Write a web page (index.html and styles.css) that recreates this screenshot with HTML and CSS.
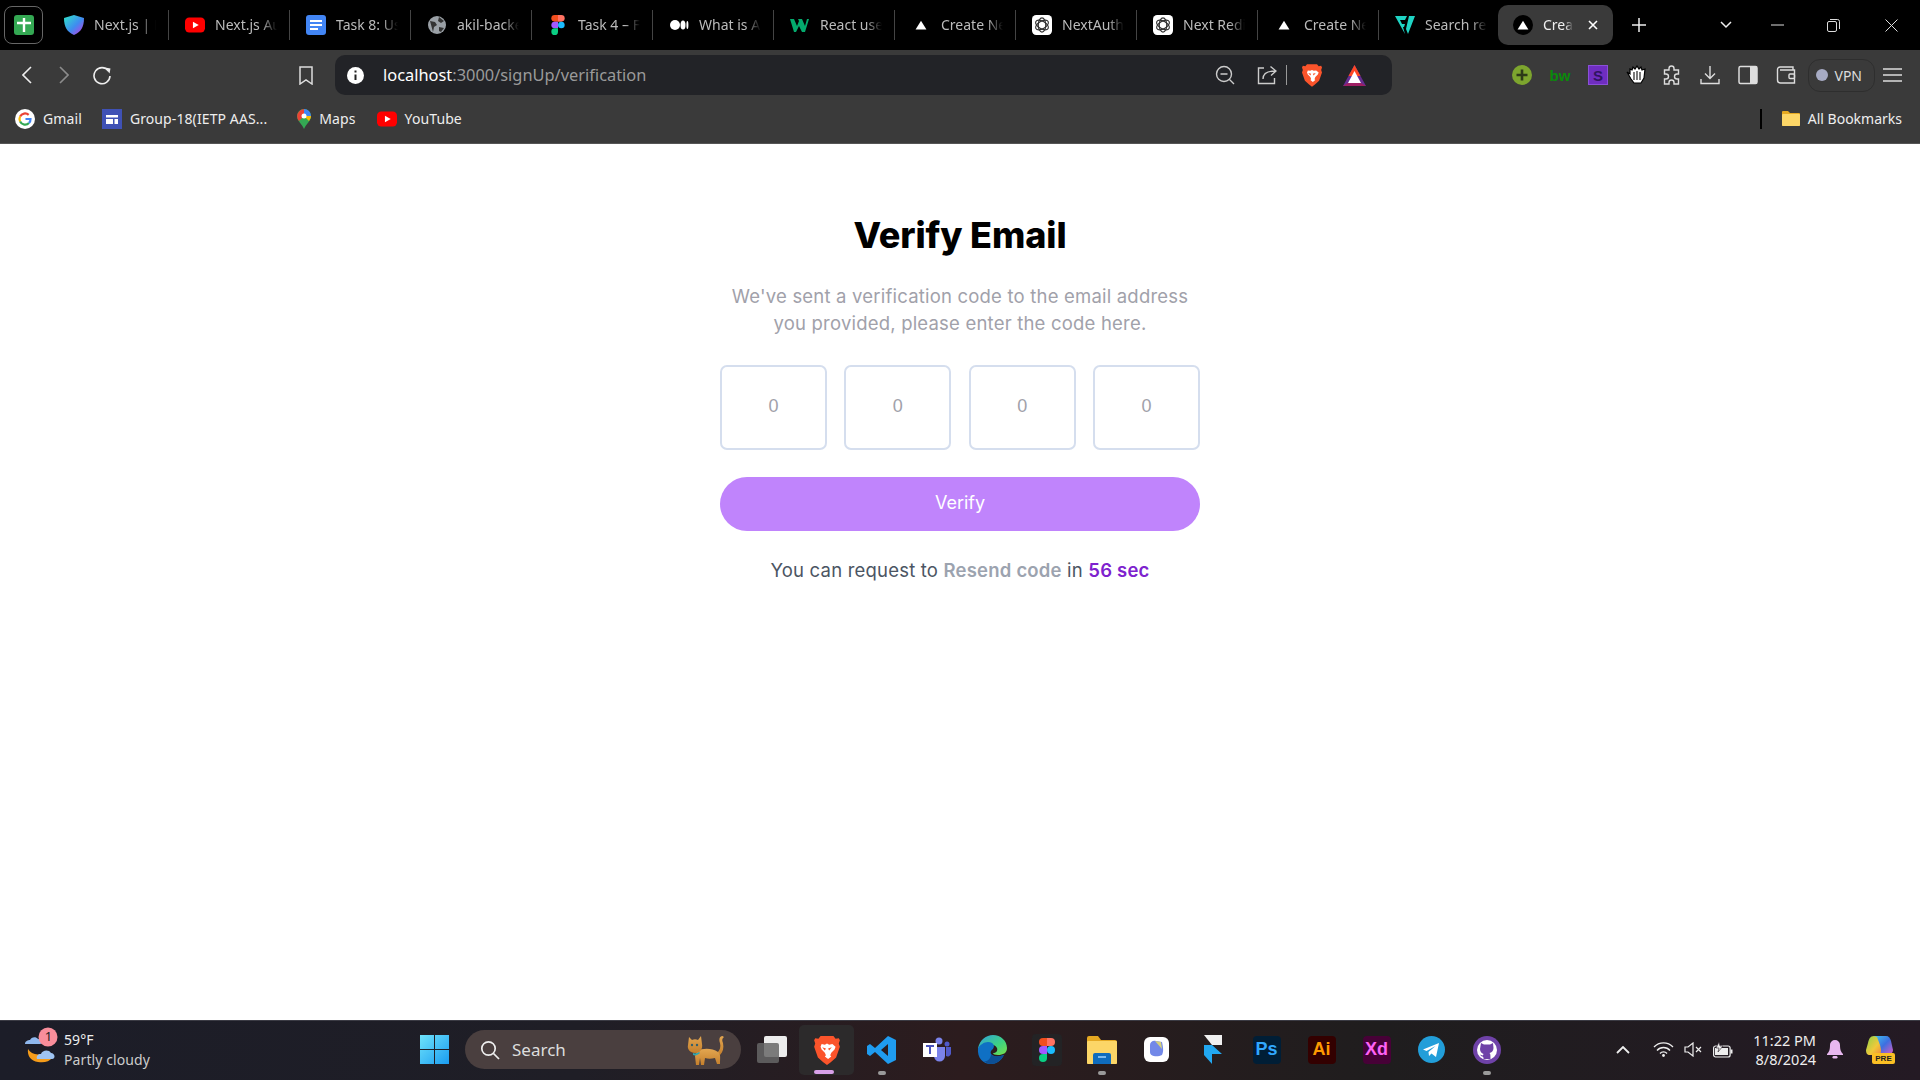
FILE: index.html
```html
<!DOCTYPE html>
<html>
	<head>
		<meta charset="utf-8">
		<title>Verify Email</title>
		<link rel="stylesheet" href="styles.css">
	</head>
	<body>
		<svg class="defs" width="0" height="0">
			<symbol id="vercel" viewBox="0 0 24 24"><circle cx="12" cy="12" r="12" fill="#000"/><path d="M12 7l6.500 10.500h-13z" fill="#fff"/></symbol>
			<symbol id="openai" viewBox="0 0 24 24"><rect width="24" height="24" rx="5" fill="#fff"/><g fill="none" stroke="#333" stroke-width="1.4"><ellipse cx="12" cy="12" rx="4.5" ry="8.5"/><ellipse cx="12" cy="12" rx="4.5" ry="8.5" transform="rotate(60 12 12)"/><ellipse cx="12" cy="12" rx="4.5" ry="8.5" transform="rotate(120 12 12)"/></g></symbol>
			<symbol id="yt" viewBox="0 0 24 24"><rect y="3" width="24" height="18" rx="5" fill="#f00"/><path d="M9.5 8l7 4-7 4z" fill="#fff"/></symbol>
			<symbol id="figma" viewBox="0 0 24 36"><path d="M12 0H6a6 6 0 000 12h6z" fill="#f24e1e"/><path d="M12 0h6a6 6 0 010 12h-6z" fill="#ff7262"/><path d="M12 12H6a6 6 0 000 12h6z" fill="#a259ff"/><circle cx="18" cy="18" r="6" fill="#1abcfe"/><path d="M6 24h6v6a6 6 0 11-6-6z" fill="#0acf83"/></symbol>
			<symbol id="brave" viewBox="0 0 24 28"><path d="M6 1h12l2 2.500 3-.5 1 2-1 3 1 3-3.500 10-5 4.500L12 28l-3.500-2.500-5-4.500L0 11l1-3-1-3 1-2 3 .5z" fill="#fb542b"/><path d="M7 8.500l3 .5 2-1 2 1 3-.5 3 2.500-1 2.500-3 3-1 2.500 1 1-3 2.500-3-2.500 1-1-1-2.500-3-3-1-2.500z" fill="#fff"/><path d="M7.500 11.500l3.500 1-1 2zM16.500 11.500l-3.500 1 1 2z" fill="#fb542b"/></symbol>
		</svg>

		<div class="tabstrip">
			<div class="appbtn">
				<svg width="20" height="20" viewBox="0 0 20 20"><rect width="20" height="20" rx="3" fill="#34a853"/><path d="M10 3v14M3 8h14" stroke="#fff" stroke-width="2.4"/></svg>
			</div>
			<div class="tab">
				<svg class="tabicon" viewBox="0 0 20 20"><defs><linearGradient id="sh" x1="0" y1="0" x2="1" y2="1"><stop offset="0" stop-color="#2ee6c8"/><stop offset=".55" stop-color="#3f8cf0"/><stop offset="1" stop-color="#d032e0"/></linearGradient></defs><path d="M10 0l10 3c0 9-3 14-10 17C3 17 0 12 0 3z" fill="url(#sh)"/></svg>
				<span class="tabtext">Next.js | Next</span>
			</div>
			<div class="tab"><svg class="tabicon"><use href="#yt"/></svg><span class="tabtext">Next.js Auth</span></div>
			<div class="tab">
				<svg class="tabicon" viewBox="0 0 20 20"><rect width="20" height="20" rx="3" fill="#4285f4"/><path d="M4 6h12M4 10h12M4 14h8" stroke="#fff" stroke-width="1.8"/></svg>
				<span class="tabtext">Task 8: User</span>
			</div>
			<div class="tab">
				<svg class="tabicon" viewBox="0 0 20 20"><circle cx="10" cy="10" r="9" fill="#9aa0a6"/><path d="M3 6l5 1 2 3-3 2-1 5zM12 2l5 4-3 2-3-2zM12 12l5 1-3 4-2-1z" fill="#333"/></svg>
				<span class="tabtext">akil-backend</span>
			</div>
			<div class="tab"><svg class="tabicon"><use href="#figma"/></svg><span class="tabtext">Task 4 – Fig</span></div>
			<div class="tab">
				<svg class="tabicon" viewBox="0 0 20 20"><circle cx="6" cy="10" r="5" fill="#fff"/><ellipse cx="14" cy="10" rx="2.500" ry="4.600" fill="#fff"/><ellipse cx="18.400" cy="10" rx="1" ry="4" fill="#fff"/></svg>
				<span class="tabtext">What is App</span>
			</div>
			<div class="tab">
				<svg class="tabicon" viewBox="0 0 20 20"><path d="M0 4h4l3 7 2-5-1-2h4l3 7 2-7h2l-4 13h-3l-3-6-3 6H4z" fill="#04aa6d"/></svg>
				<span class="tabtext">React useEff</span>
			</div>
			<div class="tab"><svg class="tabicon"><use href="#vercel"/></svg><span class="tabtext">Create Next</span></div>
			<div class="tab"><svg class="tabicon"><use href="#openai"/></svg><span class="tabtext">NextAuth.js</span></div>
			<div class="tab"><svg class="tabicon"><use href="#openai"/></svg><span class="tabtext">Next Redire</span></div>
			<div class="tab"><svg class="tabicon"><use href="#vercel"/></svg><span class="tabtext">Create Next</span></div>
			<div class="tab lasttab">
				<svg class="tabicon" viewBox="0 0 20 20"><path d="M0 1h12l-2 4H5l2 4h3l-1 3-1 0 2 7zM14 1h6l-7 18-2-5z" fill="#1fd4c4"/></svg>
				<span class="tabtext">Search resu</span>
			</div>
			<div class="tab activetab">
				<svg class="tabicon"><use href="#vercel"/></svg>
				<span class="tabtext">Create</span>
				<svg class="tabclose" width="10" height="10" viewBox="0 0 10 10"><path d="M1 1l8 8M9 1l-8 8" stroke="#fff" stroke-width="1.6"/></svg>
			</div>
			<svg class="newtab" width="14" height="14" viewBox="0 0 14 14"><path d="M7 0v14M0 7h14" stroke="#eee" stroke-width="1.5"/></svg>
			<div class="winbtns">
				<svg width="12" height="8" viewBox="0 0 12 8"><path d="M1 1l5 5 5-5" fill="none" stroke="#eee" stroke-width="1.5"/></svg>
				<svg class="winmin" width="13" height="2" viewBox="0 0 13 2"><path d="M0 1h13" stroke="#ddd"/></svg>
				<svg width="13" height="13" viewBox="0 0 13 13"><rect x=".5" y="2.500" width="9" height="10" rx="1.500" fill="none" stroke="#ddd"/><path d="M3 .5h7.500a2 2 0 012 2V10" fill="none" stroke="#ddd"/></svg>
				<svg class="winclose" width="13" height="13" viewBox="0 0 13 13"><path d="M.5.5l12 12M12.500.5l-12 12" stroke="#ddd"/></svg>
			</div>
		</div>

		<div class="toolbar">
			<div class="navbtns">
				<svg width="10" height="18" viewBox="0 0 10 18"><path d="M9 1L1 9l8 8" fill="none" stroke="#eee" stroke-width="1.6"/></svg>
				<svg width="10" height="18" viewBox="0 0 10 18"><path d="M1 1l8 8-8 8" fill="none" stroke="#8c8c8c" stroke-width="1.6"/></svg>
				<svg class="reload" width="20" height="20" viewBox="0 0 20 20"><path d="M16.500 6A8 8 0 1018 11" fill="none" stroke="#eee" stroke-width="1.6"/><path d="M13 2.500l5.500 1-1 5z" fill="#eee"/></svg>
			</div>
			<svg class="bookmark" width="14" height="19" viewBox="0 0 14 19"><path d="M1 1h12v17l-6-4-6 4z" fill="none" stroke="#ddd" stroke-width="1.500"/></svg>
			<div class="addressbar">
				<svg width="17" height="17" viewBox="0 0 17 17"><circle cx="8.500" cy="8.500" r="8.500" fill="#fff"/><path d="M8.500 7.500v5.500M8.500 3.500v2" stroke="#222" stroke-width="2"/></svg>
				<div class="url">localhost<span class="urlrest">:3000/signUp/verification</span></div>
				<svg class="addricon" width="20" height="20" viewBox="0 0 20 20"><circle cx="9" cy="9" r="7.500" fill="none" stroke="#ccc" stroke-width="1.400"/><path d="M5.500 9h7M14.500 14.500l4.500 4.500" stroke="#ccc" stroke-width="1.400"/></svg>
				<svg class="shareicon" width="20" height="20" viewBox="0 0 20 20"><path d="M7 3H1.500v15.500h16V13" fill="none" stroke="#ccc" stroke-width="1.400"/><path d="M6 14c0-6 4-8 12-8M13.500 1.500L19 6l-5 4.500" fill="none" stroke="#ccc" stroke-width="1.400"/></svg>
				<div class="addrsep"></div>
				<svg width="20" height="24"><use href="#brave"/></svg>
				<svg class="baticon" width="23" height="21" viewBox="0 0 23 21"><path d="M11.500 0L23 21H0z" fill="#662d91"/><path d="M11.500 0l6 11H5.500z" fill="#ff4724"/><path d="M11.500 6l6.500 12H5z" fill="#fff"/><path d="M0 21l5-3h13l5 3z" fill="#9e1f63"/></svg>
			</div>
			<div class="extensions">
				<svg class="exticon" width="20" height="20" viewBox="0 0 20 20"><circle cx="10" cy="10" r="10" fill="#7da52e"/><path d="M10 4.500v11M4.500 10h11" stroke="#2d3a18" stroke-width="2.600"/></svg>
				<span class="exticon bw">bw</span>
				<span class="exticon skicon">S</span>
				<svg class="exticon handicon" width="20" height="20" viewBox="0 0 20 20"><path d="M1 7l3 2V4l2 1 1-3 2 2 2-3 2 3 2-2 1 3 3-1-1 9-3 5H8l-3-4z" fill="#fff" stroke="#000" stroke-width="1.200"/><path d="M8 7v8M11 6v9M14 7v8" stroke="#222" stroke-width="1.200"/></svg>
				<svg class="exticon" width="20" height="20" viewBox="0 0 20 20"><path d="M7 3.500a2.500 2.500 0 015 0V5h4.500v4H15a2.500 2.500 0 000 5h1.500v5H12v-1.500a2.500 2.500 0 00-5 0V19H2.500v-5H4a2.500 2.500 0 000-5H2.500V5H7z" fill="none" stroke="#ddd" stroke-width="1.400"/></svg>
				<svg class="exticon" width="20" height="20" viewBox="0 0 20 20"><path d="M10 1v12M5 8.500l5 5 5-5M1 14v4.500h18V14" fill="none" stroke="#ddd" stroke-width="1.400"/></svg>
				<svg class="exticon" width="20" height="20" viewBox="0 0 20 20"><rect x="1" y="1.500" width="18" height="17" rx="1.500" fill="none" stroke="#ddd" stroke-width="1.500"/><rect x="12" y="1.500" width="7" height="17" fill="#ddd"/></svg>
				<svg class="exticon" width="20" height="20" viewBox="0 0 20 20"><path d="M17 5V2H4a2.500 2.500 0 00-2.500 2.500V15A3 3 0 004.500 18h14V5H4" fill="none" stroke="#ddd" stroke-width="1.400"/><rect x="13" y="9" width="5.500" height="4.500" rx="1" fill="none" stroke="#ddd" stroke-width="1.400"/></svg>
				<div class="vpn"><span class="vpndot"></span>VPN</div>
				<svg class="menuicon" width="19" height="14" viewBox="0 0 19 14"><path d="M0 1h19M0 7h19M0 13h19" stroke="#ddd" stroke-width="1.400"/></svg>
			</div>
		</div>

		<div class="bookmarks">
			<div class="bm">
				<svg width="20" height="20" viewBox="0 0 20 20"><circle cx="10" cy="10" r="10" fill="#fff"/><path d="M5.100 7.500A5.500 5.500 0 0113.700 5.900" fill="none" stroke="#ea4335" stroke-width="2.200"/><path d="M5.100 12.500a5.500 5.500 0 010-5" fill="none" stroke="#fbbc05" stroke-width="2.200"/><path d="M14 14a5.500 5.500 0 01-8.900-1.500" fill="none" stroke="#34a853" stroke-width="2.200"/><path d="M10.500 10h5a5.500 5.500 0 01-1.500 4" fill="none" stroke="#4285f4" stroke-width="2.200"/></svg>
				Gmail
			</div>
			<div class="bm bm-group">
				<svg width="20" height="20" viewBox="0 0 20 20"><rect width="20" height="20" fill="#3f51b5"/><path d="M4 6h12v2.500H4zM4 10h7v5H4zM12.500 10H16v5h-3.500z" fill="#fff"/></svg>
				Group-18(IETP AAS...
			</div>
			<div class="bm bm-maps">
				<svg width="14" height="20" viewBox="0 0 14 20"><path d="M7 0a7 7 0 017 7c0 5-5 8-7 13-2-5-7-8-7-13a7 7 0 017-7z" fill="#34a853"/><path d="M2 2.500A7 7 0 017 0l0 7-5 5a7 7 0 010-9.500z" fill="#ea4335"/><path d="M7 0a7 7 0 017 7H7z" fill="#4285f4"/><path d="M14 7c0 2-1 3.500-2 5L7 7z" fill="#fbbc05"/><circle cx="7" cy="7" r="2.500" fill="#fff"/></svg>
				Maps
			</div>
			<div class="bm bm-yt"><svg width="20" height="20"><use href="#yt"/></svg>YouTube</div>
			<div class="bmdivider"></div>
			<div class="bm bm-all">
				<svg width="20" height="17" viewBox="0 0 20 17"><path d="M1 2a1 1 0 011-1h5l2 2h9a1 1 0 011 1v11a1 1 0 01-1 1H2a1 1 0 01-1-1z" fill="#e5a922"/><rect x="1" y="4" width="18" height="12" rx="1" fill="#fcd667"/></svg>
				All Bookmarks
			</div>
		</div>

		<div class="page">
			<div class="card">
				<h1>Verify Email</h1>
				<p class="lead">We've sent a verification code to the email address you provided, please enter the code here.</p>
				<div class="codes">
					<div class="codebox">0</div>
					<div class="codebox">0</div>
					<div class="codebox">0</div>
					<div class="codebox">0</div>
				</div>
				<button class="verify">Verify</button>
				<p class="resend">You can request to <b class="resendlink">Resend code</b> in <b class="timer">56 sec</b></p>
			</div>
		</div>

		<div class="taskbar">
			<div class="weather">
				<svg class="weathericon" width="36" height="44" viewBox="0 0 36 44"><path d="M4 21c3 5 9 7 17 4l8 4c-4 5-9 6-15 5-7-1-11-6-10-13z" fill="#f59c1a"/><path d="M1 16c0-3 3-4 5-4 1-3 6-4 8-1 4 0 5 5 2 5z" fill="#8fb8ee"/><path d="M13 31c-1-3 1-5 4-5 1-4 8-5 10-1 4 0 5 6 1 6z" fill="#9fc4f2"/><circle cx="24" cy="9" r="9.500" fill="#f98e9b"/></svg>
				<span class="badge1">1</span>
				<div class="weathertext"><span>59°F</span><span class="dim">Partly cloudy</span></div>
			</div>
			<div class="startbtn">
				<svg width="29" height="29" viewBox="0 0 29 29"><defs><linearGradient id="win" x1="0" y1="0" x2="1" y2="1"><stop offset="0" stop-color="#6fe3fb"/><stop offset="1" stop-color="#1a9cf0"/></linearGradient></defs><path d="M0 0h14v14H0zM15 0h14v14H15zM0 15h14v14H0zM15 15h14v14H15z" fill="url(#win)"/></svg>
			</div>
			<div class="searchbox">
				<svg width="20" height="20" viewBox="0 0 20 20"><circle cx="8.500" cy="8.500" r="6.700" fill="none" stroke="#eee" stroke-width="1.700"/><path d="M13.500 13.500l5.500 5.500" stroke="#eee" stroke-width="1.700"/></svg>
				<span class="searchtext">Search</span>
				<svg class="cat" width="38" height="32" viewBox="0 0 38 32"><defs><linearGradient id="catfur" x1="0" y1="0" x2="0" y2="1"><stop offset="0" stop-color="#e3a650"/><stop offset="1" stop-color="#c47f2c"/></linearGradient></defs><path d="M31 19c3-3 4-6 3-10-1-3-1-6 2-7 2 0 2 2 1 2-1 1-1 3 0 5 1 5 0 9-3 12z" fill="url(#catfur)"/><path d="M11 17c6-3 15-3 21 1 3 2 2 6 2 12h-3l-2-6c-4 1-7 1-10 0l-1 7h-3l-1-7-1 7h-3l-1-9z" fill="url(#catfur)"/><path d="M3 3l3 3c2-1 4-1 6 0l3-4 1 8c1 5-2 9-7 9-5 0-8-4-7-8z" fill="url(#catfur)"/><path d="M7 19c2 1 5 0 6-1l1 1c-2 2-5 3-7 2z" fill="#2fa8b0"/><circle cx="6" cy="11" r="1.200" fill="#35606b"/><circle cx="11" cy="11" r="1.200" fill="#35606b"/></svg>
			</div>
			<div class="tbapps">
				<div class="tbapp">
					<svg width="30" height="27" viewBox="0 0 30 27"><rect x="7" y="0" width="23" height="21" rx="2" fill="#ededed"/><rect x="0" y="7" width="22" height="20" rx="2" fill="#666" opacity=".85"/></svg>
				</div>
				<div class="tbapp tbbrave"><svg width="26" height="30"><use href="#brave"/></svg><i class="activebar"></i></div>
				<div class="tbapp">
					<svg width="30" height="30" viewBox="0 0 30 30"><path d="M21 1l8 4v20l-8 4L8 17l-5 4-3-2v-8l3-2 5 4zM21 9l-7 6 7 6z" fill="#1f9cf0"/></svg><i class="rundot"></i>
				</div>
				<div class="tbapp">
					<svg width="28" height="26" viewBox="0 0 28 26"><circle cx="16" cy="4" r="3.500" fill="#7b83eb"/><circle cx="24" cy="7" r="2.500" fill="#5059c9"/><path d="M11 10h11v9a5.500 5.500 0 01-11 0z" fill="#7b83eb"/><path d="M23 10h5v7a3.500 3.500 0 01-5 2z" fill="#5059c9"/><rect y="6" width="14" height="14" fill="#fff"/><path d="M3 9h8M7 9v8" stroke="#4b53bc" stroke-width="2"/></svg>
				</div>
				<div class="tbapp">
					<svg width="30" height="30" viewBox="0 0 30 30"><defs><linearGradient id="edge" x1="0" y1="0" x2="1" y2="1"><stop offset="0" stop-color="#2f9fe0"/><stop offset=".6" stop-color="#3fd47f"/><stop offset="1" stop-color="#7be04a"/></linearGradient></defs><path d="M1 13C3 5 9 0 16 0c8 0 14 6 14 13 0 5-4 7-9 7-3 0-5-1-5-2 3 0 5-2 4-5-2-4-8-4-12-1-3 2-6 4-7 1z" fill="url(#edge)"/><path d="M1 13c2-3 6-6 10-6 6 0 7 4 5 7-2 1-3 3-2 5 2 3 8 3 13 1-3 6-8 9-13 9C6 29 0 23 1 13z" fill="#0f70c4"/><path d="M14 19c2 3 8 3 13 1-3 6-8 9-13 9-3 0-5-1-7-3 4 1 7-3 7-7z" fill="#0c4f95"/></svg>
				</div>
				<div class="tbapp"><div class="figmatile"><svg width="16" height="24"><use href="#figma"/></svg></div></div>
				<div class="tbapp">
					<svg width="30" height="28" viewBox="0 0 30 28"><path d="M0 2a2 2 0 012-2h9l3 4h14a2 2 0 012 2v20a2 2 0 01-2 2H2a2 2 0 01-2-2z" fill="#e5a922"/><rect y="5" width="30" height="23" rx="1" fill="#fcd667"/><path d="M6 19a2 2 0 012-2h14a2 2 0 012 2v9H6z" fill="#0f6cbd"/><path d="M11 21h8" stroke="#9fd3ff" stroke-width="1.500"/></svg><i class="rundot"></i>
				</div>
				<div class="tbapp">
					<svg width="25" height="25" viewBox="0 0 25 25"><rect width="25" height="25" rx="6" fill="#fff"/><path d="M6 8c0-3 3-5 6-4l6 1c1 5 2 9 0 13-4 2-12 2-12-3z" fill="#7288e8"/><path d="M11 4l6 1 1 7z" fill="#d6d27a"/></svg>
				</div>
				<div class="tbapp">
					<svg width="20" height="29" viewBox="0 0 20 29"><path d="M2 0h18v10H10z" fill="#f0f0f0"/><path d="M2 10h8l10 9H10v10l-8-9z" fill="#22a7f0"/></svg>
				</div>
				<div class="tbapp"><span class="adobe ps">Ps</span></div>
				<div class="tbapp"><span class="adobe ai">Ai</span></div>
				<div class="tbapp"><span class="adobe xd">Xd</span></div>
				<div class="tbapp">
					<svg width="27" height="27" viewBox="0 0 27 27"><circle cx="13.500" cy="13.500" r="13.500" fill="#229ed9"/><path d="M5 13.500l16-6.500-3 14-4.500-3.500-2.500 2.500-.5-4 7-6-9 5z" fill="#fff"/></svg>
				</div>
				<div class="tbapp">
					<svg width="28" height="28" viewBox="0 0 28 28"><circle cx="14" cy="14" r="14" fill="#6f42a8"/><circle cx="14" cy="14" r="10" fill="#fff"/><path d="M8 7l3 1.500h6L20 7l.5 5c0 3-2 4.500-4 5 1 1 1 2 1 6h-7c0-1.500 0-2-1-2.500-1.500 0-2-1.500-2.500-2 1 0 1.500 1 2.500 1 .5 0 .7-1 1-1.500-2-.5-3.500-2.500-3.500-5z" fill="#6f42a8"/></svg><i class="rundot"></i>
				</div>
			</div>
			<div class="tray">
				<svg class="trayicon chevup" width="14" height="8" viewBox="0 0 14 8"><path d="M1 7l6-6 6 6" fill="none" stroke="#eee" stroke-width="1.800"/></svg>
				<svg class="trayicon" width="21" height="15" viewBox="0 0 21 15"><path d="M1 5a13 13 0 0119 0M4 8.500a8.500 8.500 0 0113 0M7 11.500a4.500 4.500 0 017 0" fill="none" stroke="#eee" stroke-width="1.300"/><circle cx="10.500" cy="13.500" r="1.400" fill="#eee"/></svg>
				<svg class="trayicon" width="19" height="15" viewBox="0 0 19 15"><path d="M1 5h3l5-4v13l-5-4H1z" fill="none" stroke="#eee" stroke-width="1.200"/><path d="M12 5l5 5M17 5l-5 5" stroke="#eee" stroke-width="1.200"/></svg>
				<svg class="trayicon" width="20" height="16" viewBox="0 0 20 16"><rect x=".6" y="4" width="16.500" height="11" rx="2" fill="none" stroke="#eee" stroke-width="1.200"/><rect x="2" y="6" width="13" height="7" fill="#eee"/><rect x="17.500" y="7.500" width="2" height="4" fill="#eee"/><path d="M6 0L3 6h3l-1 4 5-6H7z" fill="#eee" stroke="#231a22" stroke-width=".6"/></svg>
				<div class="clock"><span>11:22 PM</span><span>8/8/2024</span></div>
				<svg class="bell" width="16" height="19" viewBox="0 0 16 19"><path d="M8 0a5 5 0 015 5c0 5 1 7 3 9v1H0v-1c2-2 3-4 3-9a5 5 0 015-5z" fill="#e8b7ef"/><rect x="5.500" y="16" width="5" height="2.500" rx="1.200" fill="#e8b7ef"/></svg>
				<div class="copilot">
					<svg width="29" height="24" viewBox="0 0 29 24"><defs><linearGradient id="cp" x1="0" y1="0" x2="1" y2="1"><stop offset="0" stop-color="#3fc2f0"/><stop offset=".5" stop-color="#3d6fe0"/><stop offset="1" stop-color="#e35bc0"/></linearGradient><linearGradient id="cp2" x1="0" y1="0" x2="1" y2="1"><stop offset="0" stop-color="#8bd24a"/><stop offset=".6" stop-color="#f0c93a"/><stop offset="1" stop-color="#f08a3a"/></linearGradient></defs><path d="M9 2h12c3 0 4 2 5 5l2 9c0 3-3 5-6 5H12z" fill="url(#cp)"/><path d="M9 2C5 2 4 5 3 9l-2 7c0 3 1 5 4 5h9c3-2 2-6 1-10L12 3z" fill="url(#cp2)"/></svg>
					<span class="pre">PRE</span>
				</div>
			</div>
		</div>
	</body>
</html>
```

FILE: styles.css
```css
html, body {
	margin: 0;
	padding: 0;
	height: 100%;
	}

body {
	display: flex;
	flex-direction: column;
	height: 1080px;
	overflow: hidden;
	background: #fff;
	font: 14px "Noto Sans", "Open Sans", sans-serif;
	}

.defs {
	position: absolute;
	}

/* tab strip */
.tabstrip {
	display: flex;
	align-items: center;
	height: 50px;
	flex: none;
	background: #000;
	color: #bbb;
	}

.appbtn {
	display: flex;
	align-items: center;
	justify-content: center;
	flex: none;
	box-sizing: border-box;
	width: 39px;
	height: 38px;
	margin: 0 5px 0 4px;
	border: 1px solid #666;
	border-radius: 8px;
	}

.tab {
	display: flex;
	align-items: center;
	gap: 10px;
	flex: none;
	box-sizing: border-box;
	width: 121px;
	height: 30px;
	padding-left: 16px;
	border-right: 1px solid #444;
	}

.tabicon {
	flex: none;
	width: 20px;
	height: 20px;
	}

.tabtext {
	width: 62px;
	padding-bottom: 2px;
	overflow: hidden;
	white-space: nowrap;
	-webkit-mask-image: linear-gradient(to right, #000 75%, transparent);
	mask-image: linear-gradient(to right, #000 75%, transparent);
	}

.lasttab {
	border-right: none;
	}

.activetab {
	width: 115px;
	height: 40px;
	margin-left: -2px;
	padding-left: 15px;
	background: #3a3a3a;
	border: none;
	border-radius: 10px;
	color: #eee;
	}

.activetab .tabtext {
	width: 30px;
	}

.tabclose {
	margin-left: 5px;
	}

.newtab {
	flex: none;
	margin-left: 19px;
	}

.winbtns {
	display: flex;
	align-items: center;
	gap: 43px;
	margin-left: 74px;
	}

.winmin {
	margin-left: -4px;
	}

.winclose {
	margin-left: 2px;
	}

/* toolbar */
.toolbar {
	display: flex;
	align-items: center;
	height: 50px;
	flex: none;
	background: #3a3a3a;
	}

.navbtns {
	display: flex;
	align-items: center;
	gap: 27px;
	width: 280px;
	padding-left: 22px;
	box-sizing: border-box;
	}

.reload {
	margin-left: -4px;
	}

.bookmark {
	margin: 0 22px 0 19px;
	}

.addressbar {
	display: flex;
	align-items: center;
	box-sizing: border-box;
	width: 1057px;
	height: 40px;
	padding: 0 26px 0 12px;
	background: #222327;
	border-radius: 10px;
	}

.url {
	margin-left: 19px;
	font-size: 16.4px;
	line-height: 40px;
	height: 40px;
	color: #fff;
	}

.urlrest {
	color: #9a9a9a;
	}

.addricon {
	margin-left: auto;
	}

.shareicon {
	margin-left: 22px;
	}

.addrsep {
	width: 1px;
	height: 20px;
	margin: 0 15px 0 9px;
	background: #999;
	}

.baticon {
	margin-left: 21px;
	}

.extensions {
	display: flex;
	align-items: center;
	margin-left: 120px;
	}

.exticon {
	display: flex;
	align-items: center;
	justify-content: center;
	box-sizing: border-box;
	width: 20px;
	height: 20px;
	margin-right: 18px;
	}

.handicon {
	margin-right: 15.500px;
	}

.bw {
	font: bold 15px "Liberation Sans", sans-serif;
	color: #0a8a0a;
	}

.skicon {
	background: #6f2dc0;
	border: 1px solid #8a4fd8;
	color: #2f1460;
	font: bold 15px "Liberation Sans", sans-serif;
	}

.vpn {
	display: flex;
	align-items: center;
	gap: 7px;
	box-sizing: border-box;
	width: 67px;
	height: 33px;
	margin-left: -6px;
	padding-left: 7px;
	border: 1px solid #2e2e2e;
	border-radius: 12px;
	color: #ddd;
	font-size: 14px;
	}

.vpndot {
	width: 12px;
	height: 12px;
	background: #a7abc4;
	border-radius: 50%;
	}

.menuicon {
	margin-left: 8px;
	}

/* bookmarks */
.bookmarks {
	display: flex;
	align-items: center;
	box-sizing: border-box;
	height: 44px;
	flex: none;
	padding: 0 18px 6px 15px;
	background: #3a3a3a;
	border-bottom: 1px solid #555;
	color: #eee;
	letter-spacing: .1px;
	}

.bm {
	display: flex;
	align-items: center;
	gap: 8px;
	white-space: nowrap;
	}

.bm-group {
	margin-left: 20px;
	}

.bm-maps {
	margin-left: 30px;
	}

.bm-yt {
	margin-left: 21px;
	}

.bm-all {
	gap: 7px;
	letter-spacing: 0;
	}

.bmdivider {
	width: 2px;
	height: 20px;
	margin: 0 19px 0 auto;
	background: #000;
	}

/* page */
.page {
	flex: 1;
	display: flex;
	justify-content: center;
	background: #fff;
	}

.card {
	display: flex;
	flex-direction: column;
	align-items: center;
	width: 480px;
	}

h1 {
	margin: 68px 0 0 0;
	font: 800 36px/46px "Inter", sans-serif;
	letter-spacing: -.1px;
	color: #000;
	}

.lead {
	margin: 25px 0 0 0;
	width: 480px;
	font: 400 18.500px/27px "Inter", sans-serif;
	letter-spacing: .2px;
	text-align: center;
	color: #a1a1aa;
	}

.codes {
	display: flex;
	justify-content: space-between;
	width: 100%;
	margin-top: 28px;
	}

.codebox {
	display: flex;
	align-items: center;
	justify-content: center;
	box-sizing: border-box;
	width: 107px;
	height: 85px;
	padding-bottom: 3px;
	border: 2px solid #d5deee;
	border-radius: 7px;
	font: 18px "Liberation Sans", sans-serif;
	color: #a1a1aa;
	}

.verify {
	width: 100%;
	height: 54px;
	margin-top: 27px;
	padding: 0 0 4px 0;
	background: #c084fc;
	border: none;
	border-radius: 27px;
	font: 400 18px "Inter", sans-serif;
	color: #fff;
	}

.resend {
	margin: 27px 0 0 0;
	font: 400 18.500px/24px "Inter", sans-serif;
	letter-spacing: .2px;
	color: #4b5563;
	}

.resendlink {
	font-weight: 600;
	color: #9ca3af;
	}

.timer {
	font-weight: 600;
	color: #7e22ce;
	}

/* taskbar */
.taskbar {
	display: flex;
	align-items: center;
	box-sizing: border-box;
	height: 60px;
	flex: none;
	padding-bottom: 2px;
	background: linear-gradient(to right, #1c1d28, #1f1e26 30%, #2c1c1e 50%, #1f1d1e 72%, #241a24);
	border-top: 1px solid #3b3b44;
	color: #eee;
	position: relative;
	}

.weather {
	display: flex;
	align-items: center;
	width: 412px;
	padding-left: 24px;
	box-sizing: border-box;
	position: relative;
	}

.weathericon {
	flex: none;
	overflow: visible;
	}

.badge1 {
	position: absolute;
	left: 43px;
	top: -1px;
	width: 11px;
	text-align: center;
	color: #222;
	font-size: 13px;
	}

.weathertext {
	display: flex;
	flex-direction: column;
	margin-left: 4px;
	line-height: 19.500px;
	letter-spacing: .1px;
	}

.dim {
	color: #ccc;
	}

.startbtn {
	display: flex;
	align-items: center;
	justify-content: center;
	width: 44px;
	margin-right: 9px;
	}

.searchbox {
	display: flex;
	align-items: center;
	box-sizing: border-box;
	width: 276px;
	height: 39px;
	padding: 0 17px 0 15px;
	background: #4a3f3f;
	border-radius: 20px;
	}

.searchtext {
	margin-left: 12px;
	font-size: 17px;
	color: #ddd;
	}

.cat {
	margin-left: auto;
	}

.tbapps {
	display: flex;
	align-items: center;
	margin-left: 3px;
	}

.tbapp {
	display: flex;
	align-items: center;
	justify-content: center;
	position: relative;
	box-sizing: border-box;
	width: 55px;
	height: 50px;
	border-radius: 5px;
	}

.tbbrave {
	background: #2c2a2b;
	}

.activebar {
	position: absolute;
	left: 15px;
	bottom: 1px;
	width: 20px;
	height: 4px;
	background: #d8a0e8;
	border-radius: 2px;
	}

.rundot {
	position: absolute;
	left: 24px;
	bottom: 0;
	width: 8px;
	height: 4px;
	background: #9a9a9a;
	border-radius: 2px;
	}

.figmatile {
	display: flex;
	align-items: center;
	justify-content: center;
	width: 30px;
	height: 32px;
	background: #232325;
	border-radius: 4px;
	}

.adobe {
	display: flex;
	align-items: center;
	justify-content: center;
	width: 28px;
	height: 28px;
	border-radius: 4px;
	font: bold 18px "Liberation Sans", sans-serif;
	}

.ps {
	background: #001e36;
	color: #31a8ff;
	}

.ai {
	background: #330000;
	color: #ff9a00;
	}

.xd {
	background: #470137;
	color: #ff61f6;
	}

.tray {
	display: flex;
	align-items: center;
	position: absolute;
	right: 25px;
	top: 0;
	height: 57px;
	}

.trayicon {
	margin-right: 10px;
	}

.chevup {
	margin-right: 23px;
	}

.clock {
	display: flex;
	flex-direction: column;
	align-items: flex-end;
	margin-left: 10.500px;
	font-size: 14.500px;
	line-height: 19px;
	}

.bell {
	margin-left: 11px;
	}

.copilot {
	position: relative;
	width: 30px;
	height: 32px;
	margin-left: 22px;
	}

.pre {
	position: absolute;
	left: 7px;
	top: 19px;
	width: 23px;
	height: 11px;
	background: #fbbf24;
	border-radius: 2px;
	font: bold 8px/11px "Liberation Sans", sans-serif;
	text-align: center;
	color: #222;
	}
```
